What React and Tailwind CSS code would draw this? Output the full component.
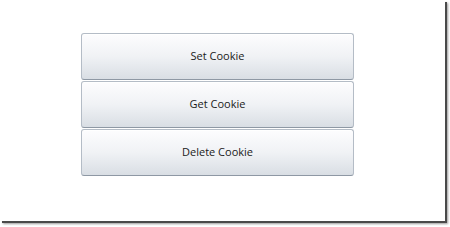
export default function App() {
  const labels = ["Set Cookie", "Get Cookie", "Delete Cookie"];
  return (
    <div className="w-[450px] h-[227px] bg-white overflow-hidden">
      <div className="w-[445px] h-[221px] bg-white shadow-[2px_2px_0_#4a4a4a,3px_3px_2px_#9a9a9a] pt-[33px] pl-[81px]">
        <div className="flex flex-col gap-[1px] w-[273px]">
          {labels.map((l) => (
            <button
              key={l}
              className="h-[47px] w-full rounded-[3px] border border-[#b4bcc6] border-b-[#8e98a4] bg-gradient-to-b from-[#fdfdfe] via-[#f0f2f5] to-[#d9dee4] text-[11px] font-medium text-[#1a1a1a] font-['Open_Sans',sans-serif] shadow-[inset_0_1px_0_#ffffff]"
            >
              {l}
            </button>
          ))}
        </div>
      </div>
    </div>
  );
}
